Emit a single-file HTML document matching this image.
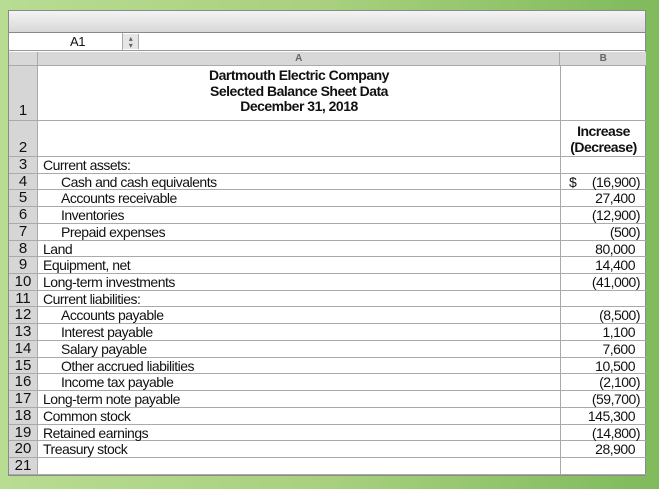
<!DOCTYPE html>
<html><head><style>
*{margin:0;padding:0;box-sizing:border-box}
body{width:659px;height:489px;overflow:hidden;background:linear-gradient(90deg,#b8dc92 0%,#a8d07e 50%,#7fba5c 100%);font-family:"Liberation Sans Narrow","Liberation Sans",sans-serif;color:#111;position:relative;letter-spacing:-0.5px}
.win{position:absolute;left:8px;top:10px;width:638px;height:466px;background:#fff;border:1px solid #8a8a8a}
.title{position:absolute;left:0;top:0;width:100%;height:22px;background:linear-gradient(#f4f4f4,#d8d8d8);border-bottom:1px solid #888}
.fbar{position:absolute;left:0;top:22px;width:100%;height:18px;background:#fff;border-bottom:1px solid #999}
.nb{position:absolute;left:0;top:0;width:114px;height:17px;border-right:1px solid #aaa;font-size:13px;text-align:center;line-height:17px;padding-left:24px}
.st{position:absolute;left:114px;top:1px;width:16px;height:15px;background:#e6e6e6;border-right:1px solid #aaa;font-size:8px;color:#666;text-align:center;line-height:7px;padding-top:1px}
.ch{position:absolute;top:41px;height:14px;background:#d8d8d8;border-right:1px solid #aaa;border-bottom:1px solid #aaa;font-size:10px;font-weight:bold;color:#666;text-align:center;line-height:14px;font-family:"Liberation Sans",sans-serif}
.r{position:absolute;left:0;width:637px;border-bottom:1px solid #aaa}
.rn{position:absolute;left:0;top:0;bottom:0;width:29px;background:#d6d6d6;border-right:1px solid #aaa;font-size:15px;text-align:center;letter-spacing:0}
.a{position:absolute;left:34px;font-size:14px;white-space:nowrap}
.b{position:absolute;left:551px;top:0;bottom:0;width:86px;border-left:1px solid #aaa;font-size:14px;text-align:right}
</style></head><body>
<div class="win">
<div class="title"></div>
<div class="fbar"><div class="nb">A1</div><div class="st">▴<br>▾</div></div>
<div class="ch" style="left:0;width:29px"></div>
<div class="ch" style="left:29px;width:522px">A</div>
<div class="ch" style="left:551px;width:86px;border-right:none">B</div>
<div class="r" style="top:55px;height:55px"><div class="rn" style="line-height:14px;padding-top:38px">1</div>
<div style="position:absolute;left:29px;width:522px;top:2px;text-align:center;font-weight:bold;font-size:14px;line-height:15.5px">Dartmouth Electric Company<br>Selected Balance Sheet Data<br>December 31, 2018</div><div class="b"></div></div>
<div class="r" style="top:110px;height:36px"><div class="rn" style="padding-top:19px;line-height:16px">2</div>
<div class="b" style="text-align:center;font-weight:bold;line-height:16px;padding-top:2px">Increase<br>(Decrease)</div></div>
<div id="rows"></div>
<script>
var d=[["3","Current assets:",0,""],["4","Cash and cash equivalents",1,"$&nbsp;&nbsp;&nbsp;(16,900)"],["5","Accounts receivable",1,"27,400 "],["6","Inventories",1,"(12,900)"],["7","Prepaid expenses",1,"(500)"],["8","Land",0,"80,000 "],["9","Equipment, net",0,"14,400 "],["10","Long-term investments",0,"(41,000)"],["11","Current liabilities:",0,""],["12","Accounts payable",1,"(8,500)"],["13","Interest payable",1,"1,100 "],["14","Salary payable",1,"7,600 "],["15","Other accrued liabilities",1,"10,500 "],["16","Income tax payable",1,"(2,100)"],["17","Long-term note payable",0,"(59,700)"],["18","Common stock",0,"145,300 "],["19","Retained earnings",0,"(14,800)"],["20","Treasury stock",0,"28,900 "],["21","",0,""]];
var h="";for(var i=0;i<d.length;i++){var t=146+i*16.72;var v=d[i][3];var pr=v.slice(-1)==" "?11:6;
if(v.indexOf("$")==0){pr=6}
h+='<div class="r" style="top:'+t+'px;height:16.72px;line-height:16px"><div class="rn">'+d[i][0]+'</div><div class="a" style="left:'+(d[i][2]?52:34)+'px">'+d[i][1]+'</div><div class="b" style="padding-right:'+pr+'px">'+(v.indexOf("$")==0?'<span style="float:left;padding-left:8px">$</span>(16,900)':v.trim())+'</div></div>';}
document.getElementById("rows").innerHTML=h;
</script>
</div>
</body></html>
